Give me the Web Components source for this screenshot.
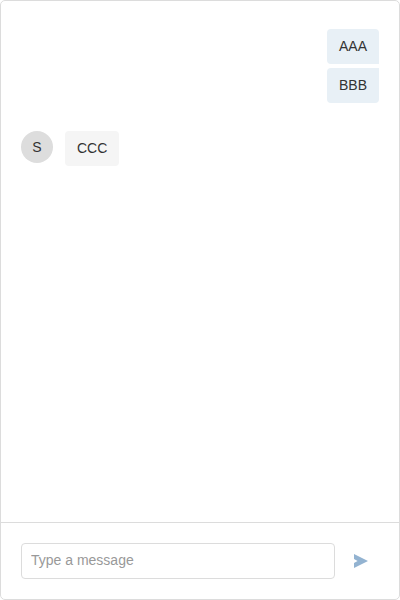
<!DOCTYPE html>
<html lang="en">
<head>
<meta charset="utf-8">
<title>Chat</title>
<style>
html, body { margin: 0; height: 100%; background: #fff; }
body { font: 14px/20px "Liberation Sans", Arial, sans-serif; color: #333; }
</style>
</head>
<body>
<chat-window>
  <message-group own>
    <message-bubble own first>AAA</message-bubble>
    <message-bubble own last>BBB</message-bubble>
  </message-group>
  <message-group>
    <user-avatar slot="avatar">S</user-avatar>
    <message-bubble>CCC</message-bubble>
  </message-group>
  <message-composer slot="footer"></message-composer>
</chat-window>
<script>
function define(name, html) {
  const template = document.createElement('template');
  template.innerHTML = html;
  customElements.define(name, class extends HTMLElement {
    constructor() {
      super();
      this.attachShadow({ mode: 'open' }).append(template.content.cloneNode(true));
    }
  });
}

define('chat-window', `
<style>
:host { display: flex; flex-direction: column; box-sizing: border-box; height: 100vh; border: 1px solid #dcdcdc; border-radius: 5px; }
.messages { flex: 1; display: flex; flex-direction: column; gap: 28px; padding: 28px 20px; box-sizing: border-box; min-height: 0; }
</style>
<div class="messages"><slot></slot></div>
<slot name="footer"></slot>`);

define('message-group', `
<style>
:host { display: flex; gap: 12px; }
:host([own]) { justify-content: flex-end; }
.list { display: flex; flex-direction: column; gap: 4px; align-items: flex-start; }
:host([own]) .list { align-items: flex-end; }
:host([own]) slot[name] { display: none; }
</style>
<slot name="avatar"></slot>
<div class="list"><slot></slot></div>`);

define('message-bubble', `
<style>
:host { display: block; box-sizing: border-box; height: 35px; padding: 7px 12px 8px; border-radius: 4px; background: #f5f5f5; }
:host([own]) { background: #e8f0f6; }
:host([first]) { border-bottom-right-radius: 0; }
:host([last]) { border-top-right-radius: 0; }
</style>
<slot></slot>`);

define('user-avatar', `
<style>
:host { display: flex; align-items: center; justify-content: center; width: 32px; height: 32px; border-radius: 50%; background: #ddd; }
</style>
<slot></slot>`);

define('send-button', `
<style>
:host { display: block; }
button { display: flex; align-items: center; justify-content: center; width: 44px; height: 36px; margin: 0; padding: 0; border: 0; background: none; }
svg { display: block; width: 16px; height: 16px; }
</style>
<button aria-label="Send"><svg viewBox="0 0 16 16"><path fill="#93b3d1" d="M1 1 L15 8 L1 15 L1 10 L4.6 8 L1 6 Z"/></svg></button>`);

define('message-composer', `
<style>
:host { display: flex; gap: 4px; box-sizing: border-box; height: 77px; padding: 20px 16px 20px 20px; border-top: 1px solid #dcdcdc; }
input { flex: 1; min-width: 0; box-sizing: border-box; height: 36px; margin: 0; padding: 0 9px 2px; border: 1px solid #dcdcdc; border-radius: 4px; outline: 0; background: #fff; font: inherit; color: inherit; }
input::placeholder { color: #999; opacity: 1; }
</style>
<input type="text" placeholder="Type a message">
<send-button></send-button>`);
</script>
</body>
</html>
